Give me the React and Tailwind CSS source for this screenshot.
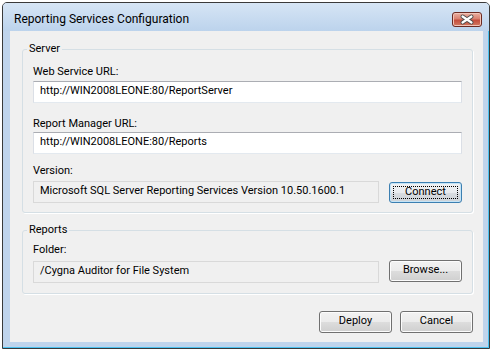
const btn =
  "h-[22px] w-[73px] rounded-[3px] border border-[#707070] bg-[linear-gradient(#f2f2f2_0%,#ebebeb_50%,#dddddd_50%,#cfcfcf_100%)] shadow-[inset_0_0_0_1px_#fcfcfc] text-[11px] text-black flex items-center justify-center pb-[1px]"

const field =
  "h-[22px] w-full bg-white border border-[#dbdfe6] border-t-[#abadb3] border-b-[#e3e9ef] flex items-center pl-[6px] pb-[1px] text-[11px] text-black whitespace-nowrap overflow-hidden"

const readonly =
  "h-[22px] flex-1 bg-[#f0f0f0] border border-[#d9d9d9] flex items-center pl-[6px] pb-[1px] text-[11px] text-black whitespace-nowrap overflow-hidden"

function CloseButton() {
  return (
    <div className="mt-[9px] h-[15px] w-[30px] rounded-[3px] border border-[#6b2a22] bg-[linear-gradient(#eab0a2_0%,#d98170_45%,#c44d3c_55%,#d27a62_100%)] shadow-[inset_0_0_0_1px_#f2c4b8] flex items-center justify-center">
      <svg width="28" height="13" viewBox="0 0 28 13">
        <path d="M9.5 3.5 L18.5 9.5 M18.5 3.5 L9.5 9.5" stroke="#4a4a4a" strokeWidth="4" strokeLinecap="round" />
        <path d="M9.5 3.5 L18.5 9.5 M18.5 3.5 L9.5 9.5" stroke="#ffffff" strokeWidth="2.2" strokeLinecap="round" />
      </svg>
    </div>
  )
}

export default function App() {

  return (

    <div className="w-[491px] h-[352px] bg-white overflow-hidden pl-[2px] pt-[2px] font-['Roboto',sans-serif]">

      <div className="w-[488px] h-[347px] rounded-t-[5px] border border-[#3a3a3a] bg-[#bfd4ec] shadow-[inset_-1px_-1px_0_#4cc2f0] flex flex-col">

        <div className="h-[28px] shrink-0 rounded-t-[4px] bg-[linear-gradient(#d6e5f5,#bcd3ec)] flex justify-between pl-[11px] pr-[7px]">
          <div className="pt-[9px] text-[12px] leading-[14px] text-black">
            Reporting Services Configuration
          </div>
          <CloseButton />
        </div>

        <div className="ml-[7px] w-[473px] h-[311px] bg-[#f0f0f0] pt-[11px]">

          <fieldset className="ml-[12px] w-[451px] rounded-[3px] border border-[#d5dfe5] shadow-[1px_1px_0_#ffffff] px-[10px] pb-[9px]">
            <legend className="ml-[-6px] px-[2px] text-[11px] leading-[14px] text-black">Server</legend>

            <div className="mt-[9px] text-[11px] leading-[14px] text-black">Web Service URL:</div>
            <div className={"mt-[2px] " + field}>http://WIN2008LEONE:80/ReportServer</div>

            <div className="mt-[14px] text-[11px] leading-[14px] text-black">Report Manager URL:</div>
            <div className={"mt-[1px] " + field}>http://WIN2008LEONE:80/Reports</div>

            <div className="mt-[10px] text-[11px] leading-[14px] text-black">Version:</div>
            <div className="mt-[3px] flex items-start gap-[10px]">
              <div className={readonly + " pl-[5px]"}>Microsoft SQL Server Reporting Services Version 10.50.1600.1</div>
              <div className="relative mt-[1px] h-[21px] w-[73px] rounded-[3px] border border-[#3c7fb1] bg-[linear-gradient(#f0f2f4_0%,#e8ebee_50%,#d9dde1_50%,#cdd2d7_100%)] shadow-[inset_0_0_0_1px_#c4e4f7] text-[11px] text-black flex items-center justify-center pb-[1px]">
                <span className="absolute inset-[3px] border border-dotted border-black"></span>
                Connect
              </div>
            </div>
          </fieldset>

          <fieldset className="mt-[10px] ml-[12px] w-[451px] rounded-[3px] border border-[#d5dfe5] shadow-[1px_1px_0_#ffffff] px-[10px] pb-[10px]">
            <legend className="ml-[-6px] px-[2px] text-[11px] leading-[14px] text-black">Reports</legend>

            <div className="mt-[6px] text-[11px] leading-[14px] text-black">Folder:</div>
            <div className="mt-[3px] flex items-start gap-[10px]">
              <div className={readonly + " mt-[1px]"}>/Cygna Auditor for File System</div>
              <div className={btn}>Browse...</div>
            </div>
          </fieldset>

          <div className="mt-[17px] pr-[10px] flex justify-end gap-[8px]">
            <div className={btn}>Deploy</div>
            <div className={btn}>Cancel</div>
          </div>

        </div>

      </div>

    </div>

  )

}
